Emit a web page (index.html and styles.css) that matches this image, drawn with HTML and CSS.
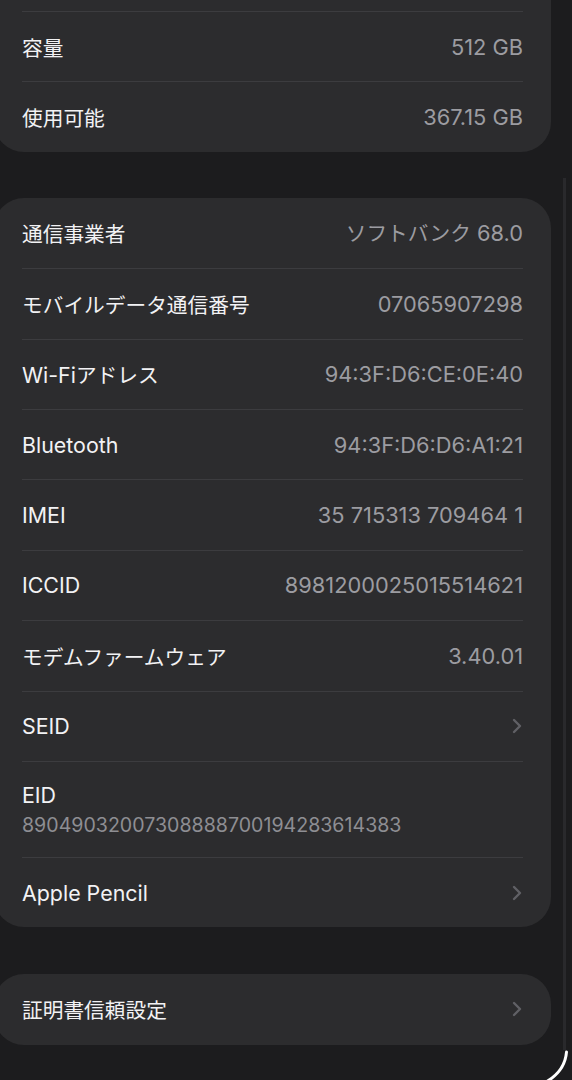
FILE: index.html
```html
<!DOCTYPE html>
<html lang="ja">
<head>
<meta charset="utf-8">
<title>情報</title>
<link rel="stylesheet" href="styles.css">
</head>
<body>
<div class="screen">
  <div class="card card-top">
    <div class="row"><div class="row-in sep"><span class="label jp">容量</span><span class="value">512 GB</span></div></div>
    <div class="row"><div class="row-in sep"><span class="label jp">使用可能</span><span class="value">367.15 GB</span></div></div>
  </div>

  <div class="card">
    <div class="row"><div class="row-in"><span class="label jp">通信事業者</span><span class="value"><span class="jp">ソフトバンク</span> 68.0</span></div></div>
    <div class="row"><div class="row-in sep"><span class="label jp">モバイルデータ通信番号</span><span class="value">07065907298</span></div></div>
    <div class="row"><div class="row-in sep"><span class="label">Wi-Fi<span class="jp">アドレス</span></span><span class="value">94:3F:D6:CE:0E:40</span></div></div>
    <div class="row"><div class="row-in sep"><span class="label">Bluetooth</span><span class="value">94:3F:D6:D6:A1:21</span></div></div>
    <div class="row"><div class="row-in sep"><span class="label">IMEI</span><span class="value">35 715313 709464 1</span></div></div>
    <div class="row"><div class="row-in sep"><span class="label">ICCID</span><span class="value">8981200025015514621</span></div></div>
    <div class="row"><div class="row-in sep"><span class="label jp">モデムファームウェア</span><span class="value">3.40.01</span></div></div>
    <div class="row"><div class="row-in sep"><span class="label">SEID</span><svg class="chev" viewBox="0 0 10 16"><path d="M2 2 L8 8 L2 14"/></svg></div></div>
    <div class="row row-tall"><div class="row-in sep stack"><span class="label">EID</span><span class="sub">89049032007308888700194283614383</span></div></div>
    <div class="row"><div class="row-in sep"><span class="label">Apple Pencil</span><svg class="chev" viewBox="0 0 10 16"><path d="M2 2 L8 8 L2 14"/></svg></div></div>
  </div>

  <div class="card card-single">
    <div class="row"><div class="row-in"><span class="label jp">証明書信頼設定</span><svg class="chev" viewBox="0 0 10 16"><path d="M2 2 L8 8 L2 14"/></svg></div></div>
  </div>

  <div class="scroll-line"></div>
  <svg class="bezel" viewBox="0 0 572 1080" width="572" height="1080">
    <path d="M566.5 1052 Q565 1071 546 1082"/>
  </svg>
</div>
</body>
</html>
```

FILE: styles.css
```css
html, body {
  margin: 0;
  padding: 0;
  background: #1c1c1e;
}
body {
  width: 572px;
  height: 1080px;
  overflow: hidden;
  font-family: "Inter", "Noto Sans CJK JP", sans-serif;
  -webkit-font-smoothing: antialiased;
}
.screen {
  position: relative;
  width: 572px;
  height: 1080px;
  overflow: hidden;
}
.card {
  width: 557px;
  margin-left: -6px;
  background: #2c2c2e;
  border-radius: 30px;
  padding: 0 28px;
  box-sizing: border-box;
  margin-top: 46px;
}
.card-top {
  margin-top: 0;
  border-radius: 0 0 30px 30px;
  padding-top: 11px;
}
.card-single {
  margin-top: 47px;
}
.row {
  height: 70.4px;
}
.row-tall {
  height: 96px;
}
.row-in {
  height: 100%;
  display: flex;
  align-items: center;
  justify-content: space-between;
  box-sizing: border-box;
}
.sep {
  border-top: 1px solid #3c3c3f;
}
.stack {
  flex-direction: column;
  align-items: flex-start;
  justify-content: center;
  gap: 3px;
}
.label {
  color: #f2f2f4;
  font-size: 21.4px;
  line-height: 28px;
}
.value {
  color: #9c9ca1;
  font-size: 21.8px;
  line-height: 28px;
}
.jp {
  font-family: "Noto Sans CJK JP", sans-serif;
  font-size: 20.7px;
}
.sub {
  color: #8e8e93;
  font-size: 19.6px;
  line-height: 26px;
}
.chev {
  width: 10px;
  height: 16px;
  margin-right: 1px;
}
.chev path {
  fill: none;
  stroke: #606065;
  stroke-width: 2.4;
  stroke-linecap: round;
  stroke-linejoin: round;
}
.scroll-line {
  position: absolute;
  left: 563px;
  top: 178px;
  width: 3px;
  height: 872px;
  background: #29292c;
}
.bezel {
  position: absolute;
  left: 0;
  top: 0;
  pointer-events: none;
}
.bezel path {
  fill: none;
  stroke: #ffffff;
  stroke-width: 3;
  stroke-linecap: round;
}
```
